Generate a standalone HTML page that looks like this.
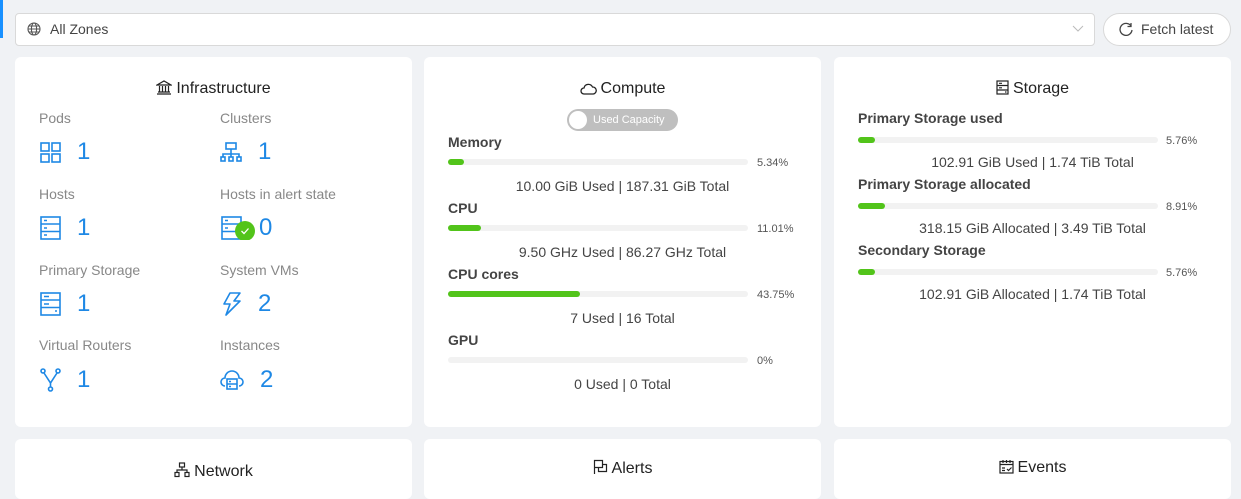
<!DOCTYPE html>
<html><head><style>
*{box-sizing:border-box;margin:0;padding:0}
body{width:1241px;height:488px;overflow:hidden;background:#f0f2f5;font-family:"Liberation Sans",sans-serif;position:relative;color:rgba(0,0,0,.85)}
.abs{position:absolute}
.card{position:absolute;background:#fff;border-radius:6px}
.title{position:absolute;left:0;right:0;text-align:center;font-size:16px;color:#222}
.title svg{vertical-align:-2px;margin-right:4px}
.lbl{position:absolute;font-size:14px;color:#888}
.num{position:absolute;font-size:24px;color:#1e88e5;display:flex;align-items:center}
.num svg{margin-right:16px}
.sl{position:absolute;font-size:14px;font-weight:bold;color:#444}
.bar{position:absolute;width:300px;height:6px;background:#f2f2f2;border-radius:3px}
.bar i{display:block;height:6px;background:#52c41a;border-radius:3px}
.pct{position:absolute;font-size:11px;color:#555}
.txt{position:absolute;left:0;width:397px;font-size:14px;color:#444;text-align:center}
</style></head><body>
<div class="abs" style="left:0;top:0;width:3px;height:38px;background:#1890ff"></div>
<div class="abs" style="left:15px;top:13px;width:1080px;height:33px;background:#fff;border:1px solid #d9d9d9;border-radius:4px"></div>
<svg class="abs" style="left:27px;top:22px" width="14" height="14" viewBox="0 0 14 14" fill="none" stroke="#555" stroke-width="1.1"><circle cx="7" cy="7" r="6"/><ellipse cx="7" cy="7" rx="2.6" ry="6"/><path d="M1 7h12M2 4h10M2 10h10"/></svg>
<div class="abs" style="left:50px;top:21px;font-size:14px;color:#444">All Zones</div>
<svg class="abs" style="left:1072px;top:25px" width="12" height="8" viewBox="0 0 12 8" fill="none" stroke="#bbb"><path d="M1 1l5 5 5-5"/></svg>
<div class="abs" style="left:1103px;top:13px;width:128px;height:33px;background:#fff;border:1px solid #d9d9d9;border-radius:17px"></div>
<svg class="abs" style="left:1119px;top:22px" width="14" height="14" viewBox="0 0 14 14" fill="none" stroke="#444" stroke-width="1.3"><path d="M12 4A6 6 0 1 0 13 8"/><path d="M12 1v3.5H8.5"/></svg>
<div class="abs" style="left:1141px;top:21px;font-size:14px;color:#444">Fetch latest</div>

<div class="card" style="left:15px;top:57px;width:397px;height:370px">
<div class="title" style="top:23px"><svg width="16" height="15" viewBox="0 0 16 15" fill="none" stroke="#222" stroke-width="1.2"><path d="M1 5L8 1l7 4zM1 14h14M2 12h12M3.5 6v6M6.5 6v6M9.5 6v6M12.5 6v6"/></svg>Infrastructure</div>
<div class="lbl" style="left:24px;top:53px">Pods</div>
<div class="num" style="left:25px;top:81px"><svg width="21" height="21" viewBox="0 0 21 21" fill="none" stroke="#1e88e5" stroke-width="1.6"><rect x="1" y="1" width="8" height="8"/><rect x="12" y="1" width="8" height="8"/><rect x="1" y="12" width="8" height="8"/><rect x="12" y="12" width="8" height="8"/></svg>1</div>
<div class="lbl" style="left:205px;top:53px">Clusters</div>
<div class="num" style="left:205px;top:81px"><svg width="22" height="21" viewBox="0 0 22 21" fill="none" stroke="#1e88e5" stroke-width="1.6"><rect x="6" y="1" width="10" height="6"/><path d="M11 7v5M3 15v-3h16v3M11 12v3"/><rect x="1" y="15" width="4" height="4"/><rect x="9" y="15" width="4" height="4"/><rect x="17" y="15" width="4" height="4"/></svg>1</div>
<div class="lbl" style="left:24px;top:129px">Hosts</div>
<div class="num" style="left:25px;top:157px"><svg width="21" height="24" viewBox="0 0 21 24" fill="none" stroke="#1e88e5" stroke-width="1.6"><rect x="1" y="1" width="19" height="22"/><path d="M1 8h19M1 15.5h19M4 4.5h3M4 12h3M4 19h3"/></svg>1</div>
<div class="lbl" style="left:205px;top:129px">Hosts in alert state</div>
<div class="num" style="left:206px;top:157px"><svg width="40" height="24" viewBox="0 0 40 24" fill="none" stroke="#1e88e5" stroke-width="1.6" style="margin-right:0"><rect x="1" y="1" width="19" height="22"/><path d="M1 8h19M1 15.5h19M4 4.5h3M4 12h3"/><circle cx="24" cy="15" r="10" fill="#52c41a" stroke="none"/><path d="M20.5 15l2.5 2.5 4.5-5" stroke="#fff" stroke-width="1.3"/></svg><span style="margin-left:-2px">0</span></div>
<div class="lbl" style="left:24px;top:205px">Primary Storage</div>
<div class="num" style="left:25px;top:233px"><svg width="21" height="24" viewBox="0 0 21 24" fill="none" stroke="#1e88e5" stroke-width="1.6"><rect x="1" y="1" width="19" height="22"/><path d="M1 8h19M1 15.5h19M4 4.5h5M4 12h5M15 19h2"/></svg>1</div>
<div class="lbl" style="left:205px;top:205px">System VMs</div>
<div class="num" style="left:206px;top:233px"><svg width="21" height="24" viewBox="0 0 21 24" fill="none" stroke="#1e88e5" stroke-width="1.6" stroke-linejoin="round"><path d="M9 1h10l-6 8h6L5 23l4-11H3z"/></svg>2</div>
<div class="lbl" style="left:24px;top:280px">Virtual Routers</div>
<div class="num" style="left:25px;top:309px"><svg width="21" height="24" viewBox="0 0 21 24" fill="none" stroke="#1e88e5" stroke-width="1.6"><circle cx="3" cy="3" r="2"/><circle cx="18" cy="3" r="2"/><circle cx="10.5" cy="21" r="2"/><path d="M4 5l6.5 10 6.5-10M10.5 15v4"/></svg>1</div>
<div class="lbl" style="left:205px;top:280px">Instances</div>
<div class="num" style="left:205px;top:309px"><svg width="24" height="22" viewBox="0 0 24 22" fill="none" stroke="#1e88e5" stroke-width="1.6"><path d="M5 17A4 4 0 0 1 5 9a7 7 0 0 1 14 0 4 4 0 0 1 0 8"/><rect x="7" y="10" width="10" height="10"/><path d="M7 15h10M9 12.5h2M9 17.5h2"/></svg>2</div>
</div>

<div class="card" style="left:424px;top:57px;width:397px;height:370px">
<div class="title" style="top:23px"><svg width="17" height="12" viewBox="0 0 17 12" fill="none" stroke="#222" stroke-width="1.3"><path d="M4 11a3 3 0 0 1 0-6 4.5 4.5 0 0 1 8.5-1A3.5 3.5 0 0 1 13 11z"/></svg>Compute</div>
<div class="abs" style="left:143px;top:52px;width:111px;height:22px;background:#bfbfbf;border-radius:11px"><div style="position:absolute;left:2px;top:2px;width:18px;height:18px;border-radius:50%;background:#fff"></div><div style="position:absolute;left:26px;top:5px;font-size:11px;color:#fff;line-height:13px">Used Capacity</div></div>
<div class="sl" style="left:24px;top:77px">Memory</div>
<div class="bar" style="left:24px;top:102px"><i style="width:16px"></i></div><div class="pct" style="left:333px;top:100px">5.34%</div>
<div class="txt" style="top:121px">10.00 GiB Used | 187.31 GiB Total</div>
<div class="sl" style="left:24px;top:143px">CPU</div>
<div class="bar" style="left:24px;top:168px"><i style="width:33px"></i></div><div class="pct" style="left:333px;top:166px">11.01%</div>
<div class="txt" style="top:187px">9.50 GHz Used | 86.27 GHz Total</div>
<div class="sl" style="left:24px;top:209px">CPU cores</div>
<div class="bar" style="left:24px;top:234px"><i style="width:132px"></i></div><div class="pct" style="left:333px;top:232px">43.75%</div>
<div class="txt" style="top:253px">7 Used | 16 Total</div>
<div class="sl" style="left:24px;top:275px">GPU</div>
<div class="bar" style="left:24px;top:300px"></div><div class="pct" style="left:333px;top:298px">0%</div>
<div class="txt" style="top:319px">0 Used | 0 Total</div>
</div>

<div class="card" style="left:834px;top:57px;width:397px;height:370px">
<div class="title" style="top:23px"><svg width="13" height="15" viewBox="0 0 13 15" fill="none" stroke="#222" stroke-width="1.2"><rect x="1" y="1" width="11" height="13"/><path d="M1 5.5h11M1 10h11M3 3.3h3M3 7.8h3M9 12h1.5"/></svg>Storage</div>
<div class="sl" style="left:24px;top:53px">Primary Storage used</div>
<div class="bar" style="left:24px;top:80px"><i style="width:17px"></i></div><div class="pct" style="left:332px;top:78px">5.76%</div>
<div class="txt" style="top:97px">102.91 GiB Used | 1.74 TiB Total</div>
<div class="sl" style="left:24px;top:119px">Primary Storage allocated</div>
<div class="bar" style="left:24px;top:146px"><i style="width:27px"></i></div><div class="pct" style="left:332px;top:144px">8.91%</div>
<div class="txt" style="top:163px">318.15 GiB Allocated | 3.49 TiB Total</div>
<div class="sl" style="left:24px;top:185px">Secondary Storage</div>
<div class="bar" style="left:24px;top:212px"><i style="width:17px"></i></div><div class="pct" style="left:332px;top:210px">5.76%</div>
<div class="txt" style="top:229px">102.91 GiB Allocated | 1.74 TiB Total</div>
</div>

<div class="card" style="left:15px;top:439px;width:397px;height:60px">
<div class="title" style="top:23px"><svg width="16" height="16" viewBox="0 0 16 16" fill="none" stroke="#222" stroke-width="1.2"><rect x="5.5" y="1" width="5" height="4"/><path d="M8 5v3M3 10.5V8h10v2.5"/><rect x="1" y="10.5" width="4" height="4"/><rect x="11" y="10.5" width="4" height="4"/></svg>Network</div>
</div>
<div class="card" style="left:424px;top:439px;width:397px;height:60px">
<div class="title" style="top:20px"><svg width="15" height="16" viewBox="0 0 15 16" fill="none" stroke="#222" stroke-width="1.2"><path d="M1.5 15V1.5h8v4h4v7h-8v-4h-4M9.5 5.5v3h-4"/></svg>Alerts</div>
</div>
<div class="card" style="left:834px;top:439px;width:397px;height:60px">
<div class="title" style="top:20px"><svg width="15" height="15" viewBox="0 0 15 15" fill="none" stroke="#222" stroke-width="1.2"><rect x="1" y="2.5" width="13" height="11.5"/><path d="M4 1v3M7.5 1v3M11 1v3M1 5.5h13M3 9h3M3 11.5h3M8 10l1.5 1.5 3-3"/></svg>Events</div>
</div>
</body></html>
